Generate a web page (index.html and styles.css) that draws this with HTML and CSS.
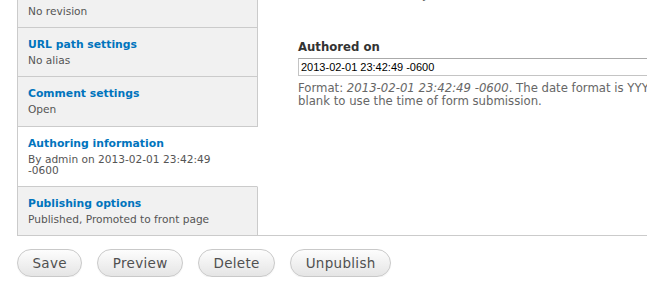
FILE: index.html
```html
<!DOCTYPE html>
<html>
<head>
<meta charset="utf-8">
<link rel="stylesheet" href="styles.css">
</head>
<body>
<div class="page">
  <div class="vtabs">
    <ul class="menu">
      <li class="item">
        <a class="title" href="#">Revision information</a>
        <span class="summary">No revision</span>
      </li>
      <li class="item">
        <a class="title" href="#">URL path settings</a>
        <span class="summary">No alias</span>
      </li>
      <li class="item">
        <a class="title" href="#">Comment settings</a>
        <span class="summary">Open</span>
      </li>
      <li class="item active">
        <a class="title" href="#">Authoring information</a>
        <span class="summary">By admin on 2013-02-01 23:42:49 -0600</span>
      </li>
      <li class="item">
        <a class="title" href="#">Publishing options</a>
        <span class="summary">Published, Promoted to front page</span>
      </li>
    </ul>
    <div class="pane">
      <p class="desc top">Leave blank for Anonymous.</p>
      <div class="form-item">
        <label class="label">Authored on</label>
        <input class="text" type="text" value="2013-02-01 23:42:49 -0600">
        <p class="desc">Format: <em>2013-02-01 23:42:49 -0600</em>. The date format is YYYY-MM-DD and -0600 is the time zone offset from UTC. Leave<br>blank to use the time of form submission.</p>
      </div>
    </div>
  </div>
  <div class="actions">
    <button class="btn">Save</button>
    <button class="btn">Preview</button>
    <button class="btn">Delete</button>
    <button class="btn">Unpublish</button>
  </div>
</div>
</body>
</html>
```
FILE: styles.css
```css
html, body {
  margin: 0;
  padding: 0;
  background: #fff;
  overflow: hidden;
}
body {
  font-family: "DejaVu Sans", Verdana, sans-serif;
  color: #333;
}
.page {
  padding-left: 17px;
  width: 630px;
  overflow: hidden;
}
.vtabs {
  display: flex;
  margin-top: -21px;
}
.menu {
  list-style: none;
  margin: 0;
  padding: 0;
  width: 240px;
  flex: none;
  border-left: 1px solid #cbcbcb;
}
.item {
  background: #f1f1f1;
  border-bottom: 1px solid #cbcbcb;
  border-right: 1px solid #cbcbcb;
  padding: 8px 10px 10px 10px;
  height: 30px;
}
.item:nth-child(3) {
  padding-bottom: 11px;
}
.item.active {
  background: #fff;
  border-right-color: #fff;
  height: 41px;
}
.title {
  display: block;
  color: #0074bd;
  font-weight: bold;
  font-size: 10.8px;
  line-height: 18px;
  text-decoration: none;
}
.summary {
  display: block;
  margin-top: 1px;
  color: #555;
  font-size: 10.6px;
  line-height: 10.5px;
  width: 200px;
}
.pane {
  flex: 1;
  border-bottom: 1px solid #cbcbcb;
  padding-left: 40px;
  min-width: 0;
  overflow: hidden;
}
.desc {
  margin: 0;
  font-size: 11.7px;
  line-height: 13px;
  color: #666;
  white-space: nowrap;
}
.desc em {
  font-style: italic;
}
.desc.top {
  margin-top: 9px;
}
.form-item {
  margin-top: 38px;
}
.label {
  display: block;
  font-weight: bold;
  font-size: 11.7px;
  line-height: 16px;
  color: #333;
}
.text {
  display: block;
  box-sizing: border-box;
  margin: 3px 0 6px 0;
  width: 420px;
  height: 18px;
  padding: 1px 2px;
  border: 1px solid #c4c4c4;
  border-top-color: #aaa;
  font-family: "Liberation Sans", Arial, sans-serif;
  font-size: 11px;
  color: #000;
  background: #fff;
}
.actions {
  display: flex;
  gap: 15px;
  margin-top: 13px;
}
.btn {
  font-family: "DejaVu Sans", Verdana, sans-serif;
  font-size: 13.5px;
  line-height: 16px;
  letter-spacing: 0.3px;
  color: #505050;
  padding: 5px 14.5px;
  border: 1px solid #c9c9c9;
  border-radius: 15px;
  background: linear-gradient(#fdfdfd, #e5e5e5);
  box-shadow: 0 1px 1px rgba(0,0,0,0.05);
}
```
